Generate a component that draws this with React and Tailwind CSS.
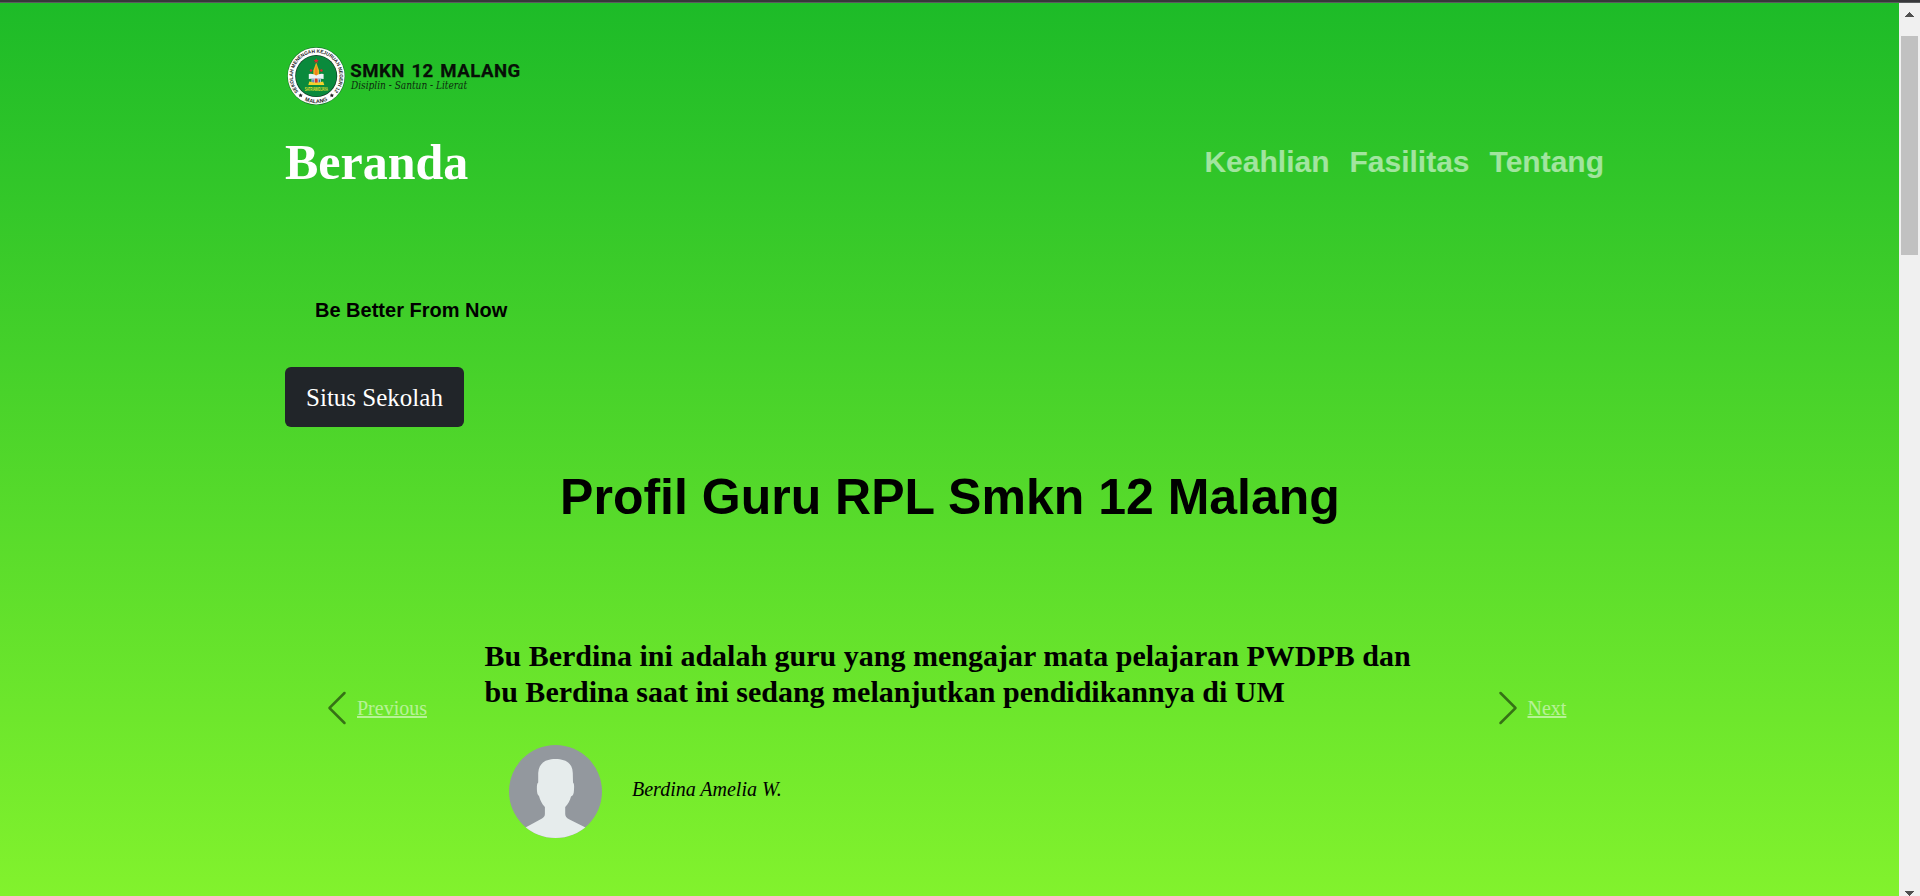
const serif = "font-['Liberation_Serif',serif]";

function Logo() {
  return (
    <svg className="block h-[60px] w-[240px]" viewBox="285 46 240 60" role="img">
      <defs>
        <path id="ringTop" d="M298.6 91.6 A23.4 23.4 0 1 1 333.8 91.6" />
        <path id="ringBottom" d="M293.2 90.400 A27.200 27.200 0 0 0 339.2 90.400" />
      </defs>
      <circle cx="316.2" cy="76.1" r="29" fill="#1c7a2e" />
      <circle cx="316.2" cy="76.1" r="28.4" fill="#fff" />
      <circle cx="316.2" cy="76.1" r="21" fill="#123d25" />
      <circle cx="316.2" cy="76.1" r="20.3" fill="#0a8a3c" />
      <g fontFamily="Liberation Sans, sans-serif" fill="#222" fontWeight="700">
        <text fontSize="5">
          <textPath href="#ringTop" textLength="106" lengthAdjust="spacingAndGlyphs">SEKOLAH MENENGAH KEJURUAN NEGERI 12</textPath>
        </text>
        <text fontSize="5.400" textAnchor="middle">
          <textPath href="#ringBottom" startOffset="50%">MALANG</textPath>
        </text>
      </g>
      <path d="M300.600 93.200l.7 1.300 1.500.2-1.100 1 .3 1.500-1.400-.7-1.300.7.2-1.500-1-1 1.500-.2zM331.800 93.200l.7 1.300 1.500.2-1.100 1 .3 1.500-1.400-.7-1.300.7.2-1.500-1-1 1.500-.2z" fill="#222" />
      <path d="M316.200 62.500l2.900 8v14h-5.800v-14z" fill="#e8b422" />
      <path d="M316.200 65l1.300 6v8h-2.600v-8z" fill="#f4801f" />
      <path d="M316.200 58.300l.8 1.700 1.800.1-1.400 1.100.5 1.800-1.700-1-1.700 1 .5-1.800-1.400-1.100 1.800-.1z" fill="#e3242b" />
      <circle cx="311" cy="70.500" r="1.200" fill="#e3242b" />
      <circle cx="321.400" cy="70.500" r="1.200" fill="#e3242b" />
      <path d="M308.800 74q4.200-.8 7.400 1.600q3.200-2.400 7.400-1.600v5q-4.200-.8-7.400 1.200q-3.200-2-7.400-1.200z" fill="#eef3f5" />
      <path d="M311.500 78h3.200v5h-3.200zM317.700 78h3.200v5h-3.200z" fill="#b9cbe0" />
      <path d="M312.400 79.500h1.300v3.500h-1.300zM318.700 79.500h1.300v3.500h-1.300z" fill="#3b6ea8" />
      <path d="M309.300 81.500l6.900 1.500 6.900-1.500 1.200 3.500h-16z" fill="#f3d22b" />
      <path d="M314.900 78.500h2.600v4h-2.600z" fill="#d8342c" />
      <text x="304.800" y="91" textLength="23" lengthAdjust="spacingAndGlyphs" fontFamily="Liberation Sans, sans-serif" fontSize="4.800" fontWeight="700" fill="#e6e02c">SATRIAWIDJAYA</text>
      <text x="350.200" y="76.900" textLength="170" lengthAdjust="spacing" fontFamily="Roboto, sans-serif" fontSize="18.600" fontWeight="700" wordSpacing="1.500" fill="#071007" stroke="#071007" strokeWidth="0.250">SMKN 12 MALANG</text>
      <text x="351" y="88.800" textLength="116" lengthAdjust="spacingAndGlyphs" fontFamily="DejaVu Serif Condensed, DejaVu Serif, serif" fontStyle="italic" fontSize="11.800" fill="#0c2a0e">Disiplin - Santun - Literat</text>
    </svg>
  );
}

function Chevron({ flip }) {
  return (
    <svg className="size-10" viewBox="0 0 16 16" fill="#000">
      {flip ? (
        <path d="M4.646 1.646a.5.5 0 0 1 .708 0l6 6a.5.5 0 0 1 0 .708l-6 6a.5.5 0 0 1-.708-.708L10.293 8 4.646 2.354a.5.5 0 0 1 0-.708z" />
      ) : (
        <path d="M11.354 1.646a.5.5 0 0 1 0 .708L5.707 8l5.647 5.646a.5.5 0 0 1-.708.708l-6-6a.5.5 0 0 1 0-.708l6-6a.5.5 0 0 1 .708 0z" />
      )}
    </svg>
  );
}

function Control({ label, flip }) {
  return (
    <a href="#guru" className="flex h-10 items-center text-[20px] leading-[30px] text-white opacity-50">
      <Chevron flip={flip} />
      <span className="underline decoration-2">{label}</span>
    </a>
  );
}

function Avatar() {
  return (
    <svg className="size-[93px]" viewBox="0 0 93 93">
      <defs>
        <clipPath id="face"><circle cx="46.500" cy="46.500" r="46.500" /></clipPath>
      </defs>
      <g clipPath="url(#face)">
        <path d="M0 0h93v93H0z" fill="#93989e" />
        <path d="M46.500 14C56 14 63.500 17.500 63.800 28L64 37.500C65.300 38.500 65.200 41 65 45C64.800 49 64 51 62 51.500C61 55.500 59 59 56.200 62V69C56.400 71.500 57.500 73 60 74.200L76.500 82.500L84 93H9L16.500 82.500L33 73.500C35 72.300 35.800 71 35.900 69V62C33 59 31.200 55.500 30 51C28.500 50 28 48 27.900 44.500C27.800 41 28 38.500 29.200 37.500V28C30 17.500 37 14 46.500 14Z" fill="#e6ecec" />
      </g>
    </svg>
  );
}

function Scrollbar() {
  return (
    <div className="flex w-[21px] flex-col items-center bg-[#f0f0f0]">
      <svg className="mt-[9px] h-[5px] w-[9px]" viewBox="0 0 9 5" shapeRendering="crispEdges"><path d="M0 5L4.500 0L9 5z" fill="#505050" /></svg>
      <div className="mt-[19px] h-[219px] w-[17px] bg-[#c1c1c1]" />
      <svg className="mt-auto h-[5px] w-[9px]" viewBox="0 0 9 5" shapeRendering="crispEdges"><path d="M0 0L4.500 5L9 0z" fill="#505050" /></svg>
    </div>
  );
}

export default function App() {
  return (
    <div className={`flex h-[896px] w-[1920px] flex-col overflow-hidden ${serif}`}>
      <div className="h-[3px] shrink-0 border-b border-[#5a5c5e] bg-[#37383a]" />
      <div className="flex min-h-0 flex-1">
        <main className="flex flex-1 flex-col bg-linear-to-b/srgb from-[#1dbb28] to-[#82f22d] px-[285px] pt-[43px]">
          <Logo />
          <nav className="mt-[26px] flex h-[60px] items-center justify-between">
            <a href="#beranda" className="text-[50px] leading-[60px] font-bold text-white">Beranda</a>
            <div className="mr-[10px] flex gap-5 pb-[2px] font-['Liberation_Sans',sans-serif] text-[30px] leading-[45px] font-bold text-white/55">
              <a href="#keahlian">Keahlian</a>
              <a href="#fasilitas">Fasilitas</a>
              <a href="#tentang">Tentang</a>
            </div>
          </nav>
          <p className="mt-[106px] ml-[30px] font-['Liberation_Sans',sans-serif] text-[20px] leading-6 font-bold text-black">Be Better From Now</p>
          <button className="mt-[45px] h-[60px] w-[179px] rounded-md bg-[#212529] pt-0.5 text-[25px] leading-[38px] text-white">Situs Sekolah</button>
          <h1 className="mt-10 pl-px text-center font-['Liberation_Sans',sans-serif] text-[50px] leading-[60px] font-bold text-black">Profil Guru RPL Smkn 12 Malang</h1>
          <section id="guru" className="mt-[111px] flex">
            <div className="mt-[50px] ml-8 w-[167.500px]"><Control label="Previous" /></div>
            <div className="w-[1003px]">
              <h2 className="w-[940px] text-[30px] leading-9 font-bold text-black">Bu Berdina ini adalah guru yang mengajar mata pelajaran PWDPB dan bu Berdina saat ini sedang melanjutkan pendidikannya di UM</h2>
              <div className="mt-[35px] ml-[24.500px] flex gap-[30px]">
                <Avatar />
                <em className="mt-[29px] text-[20px] leading-[30px] text-black">Berdina Amelia W.</em>
              </div>
            </div>
            <div className="mt-[50px]"><Control label="Next" flip /></div>
          </section>
        </main>
        <Scrollbar />
      </div>
    </div>
  );
}
